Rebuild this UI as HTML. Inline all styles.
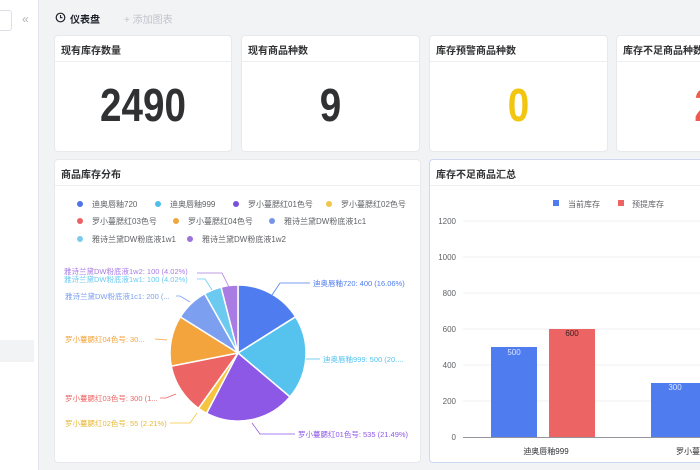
<!DOCTYPE html>
<html><head><meta charset="utf-8"><style>
*{margin:0;padding:0;box-sizing:border-box}
html,body{width:700px;height:470px;overflow:hidden}
body{background:#f2f3f5;font-family:"Liberation Sans","Noto Sans CJK SC",sans-serif;position:relative;color:#1d2129}
.side{position:absolute;left:0;top:0;width:39px;height:470px;background:#fff;border-right:1px solid #e5e6eb}
.card{position:absolute;background:#fff;border-radius:4px;border:1px solid #e8e9ed;overflow:hidden}
.title{height:26px;border-bottom:1px solid #eceef1;font-size:10px;font-weight:bold;padding:6px 0 0 6px;color:#303133;white-space:nowrap}
.num{position:absolute;left:0;right:0;top:46px;text-align:center;font-size:46px;line-height:46px;font-weight:bold;transform:scaleX(.84)}
</style></head><body>
<div class="side">
 <div style="position:absolute;left:-4px;top:10px;width:16px;height:21px;border:1px solid #dcdfe6;border-radius:3px;background:#fff"></div>
 <div style="position:absolute;left:22px;top:12px;font-size:12px;color:#b0b3b8">«</div>
 <div style="position:absolute;left:0;top:340px;width:34px;height:22px;background:#f2f3f5"></div>
</div>
<svg style="position:absolute;left:55px;top:12px" width="11" height="11" viewBox="0 0 11 11"><circle cx="5.5" cy="5.5" r="4.3" fill="none" stroke="#1d2129" stroke-width="1.2"/><path d="M5.5 3v2.7h2" fill="none" stroke="#1d2129" stroke-width="1.1"/></svg>
<div style="position:absolute;left:70px;top:11px;font-size:10px;font-weight:bold">仪表盘</div>
<div style="position:absolute;left:124px;top:11px;font-size:10px;color:#c0c4cc">+ 添加图表</div>

<div class="card" style="left:54px;top:35px;width:178px;height:117px"><div class="title">现有库存数量</div><div class="num" style="color:#303133">2490</div></div>
<div class="card" style="left:241px;top:35px;width:179px;height:117px"><div class="title">现有商品种数</div><div class="num" style="color:#303133">9</div></div>
<div class="card" style="left:429px;top:35px;width:179px;height:117px"><div class="title">库存预警商品种数</div><div class="num" style="color:#f2c511">0</div></div>
<div class="card" style="left:616px;top:35px;width:84px;height:117px;border-right:none;border-radius:4px 0 0 4px"><div class="title">库存不足商品种数</div><div style="position:absolute;left:77px;top:46px;font-size:46px;line-height:46px;font-weight:bold;color:#ee5a52">2</div></div>

<div class="card" style="left:54px;top:159px;width:367px;height:304px"><div class="title">商品库存分布</div></div>
<div class="card" style="left:429px;top:159px;width:271px;height:304px;border-color:#cfd8f3;border-right:none;border-radius:4px 0 0 4px"><div class="title">库存不足商品汇总</div></div>

<svg style="position:absolute;left:0;top:0" width="700" height="470" font-family="Liberation Sans,Noto Sans CJK SC,sans-serif" font-size="8">
<g fill="#606266">
<circle cx="80" cy="204" r="3" fill="#4f74e3"/><text x="92" y="207">迪奥唇釉720</text>
<circle cx="158" cy="204" r="3" fill="#52bde8"/><text x="170" y="207">迪奥唇釉999</text>
<circle cx="236" cy="204" r="3" fill="#7b51d8"/><text x="248" y="207">罗小蔓腮红01色号</text>
<circle cx="329" cy="204" r="3" fill="#f0c64a"/><text x="341" y="207">罗小蔓腮红02色号</text>
<circle cx="80" cy="221" r="3" fill="#ec6262"/><text x="92" y="224">罗小蔓腮红03色号</text>
<circle cx="176" cy="221" r="3" fill="#f1a63b"/><text x="188" y="224">罗小蔓腮红04色号</text>
<circle cx="272" cy="221" r="3" fill="#7596e8"/><text x="284" y="224">雅诗兰黛DW粉底液1c1</text>
<circle cx="80" cy="239" r="3" fill="#7bcbee"/><text x="92" y="242">雅诗兰黛DW粉底液1w1</text>
<circle cx="190" cy="239" r="3" fill="#9b74dc"/><text x="202" y="242">雅诗兰黛DW粉底液1w2</text>
</g>
<g stroke="#fff" stroke-width="1.5">
<path d="M238 353L238 285A68 68 0 0 1 295.57 316.81Z" fill="#4f7cee"/>
<path d="M238 353L295.57 316.81A68 68 0 0 1 289.95 396.87Z" fill="#56c3ef"/>
<path d="M238 353L289.95 396.87A68 68 0 0 1 206.59 413.31Z" fill="#8d58e6"/>
<path d="M238 353L206.59 413.31A68 68 0 0 1 198.47 408.33Z" fill="#f5c542"/>
<path d="M238 353L198.47 408.33A68 68 0 0 1 171.28 366.12Z" fill="#ec6464"/>
<path d="M238 353L171.28 366.12A68 68 0 0 1 180.40 316.86Z" fill="#f4a43c"/>
<path d="M238 353L180.40 316.86A68 68 0 0 1 204.66 293.73Z" fill="#7d9ff0"/>
<path d="M238 353L204.66 293.73A68 68 0 0 1 221.09 287.13Z" fill="#6ccaf0"/>
<path d="M238 353L221.09 287.13A68 68 0 0 1 238 285Z" fill="#a97ce4"/>
</g>
<g fill="none" stroke-width="0.8">
<path d="M272 295L280 283H310" stroke="#4f7cee"/>
<path d="M306 359H320" stroke="#56c3ef"/>
<path d="M252 423L260 434H295" stroke="#8d58e6"/>
<path d="M197 413L190 423H170" stroke="#f5c542"/>
<path d="M176 394L166 398H160" stroke="#ec6464"/>
<path d="M167 340L155 339" stroke="#f4a43c"/>
<path d="M190 302L180 296H176" stroke="#7d9ff0"/>
<path d="M212 290L205 279H197" stroke="#6ccaf0"/>
<path d="M229 287L222 273H197" stroke="#a97ce4"/>
</g>
<g font-size="7.5">
<text x="313" y="286" fill="#4f7cee">迪奥唇釉720: 400 (16.06%)</text>
<text x="323" y="362" fill="#56c3ef">迪奥唇釉999: 500 (20....</text>
<text x="298" y="437" fill="#8d58e6">罗小蔓腮红01色号: 535 (21.49%)</text>
<text x="65" y="426" fill="#e6b93a">罗小蔓腮红02色号: 55 (2.21%)</text>
<text x="65" y="401" fill="#ec6464">罗小蔓腮红03色号: 300 (1...</text>
<text x="65" y="342" fill="#f4a43c">罗小蔓腮红04色号: 30...</text>
<text x="65" y="299" fill="#7d9ff0">雅诗兰黛DW粉底液1c1: 200 (...</text>
<text x="64" y="282" fill="#6ccaf0">雅诗兰黛DW粉底液1w1: 100 (4.02%)</text>
<text x="64" y="274" fill="#a97ce4">雅诗兰黛DW粉底液1w2: 100 (4.02%)</text>
</g>
<rect x="553" y="200" width="6" height="6" fill="#4f7cee"/><text x="568" y="207" fill="#606266">当前库存</text>
<rect x="618" y="200" width="6" height="6" fill="#ec6464"/><text x="632" y="207" fill="#606266">预提库存</text>
<g stroke="#eceef1" stroke-width="0.8">
<line x1="463" y1="221" x2="700" y2="221"/><line x1="463" y1="257" x2="700" y2="257"/><line x1="463" y1="293" x2="700" y2="293"/><line x1="463" y1="329" x2="700" y2="329"/><line x1="463" y1="365" x2="700" y2="365"/><line x1="463" y1="401" x2="700" y2="401"/>
</g>
<line x1="463" y1="437.5" x2="700" y2="437.5" stroke="#6e7079" stroke-width="0.8"/>
<g fill="#606266" text-anchor="end">
<text x="456" y="224">1200</text><text x="456" y="260">1000</text><text x="456" y="296">800</text><text x="456" y="332">600</text><text x="456" y="368">400</text><text x="456" y="404">200</text><text x="456" y="440">0</text>
</g>
<rect x="491" y="347" width="46" height="90" fill="#4f7cee"/>
<rect x="549" y="329" width="46" height="108" fill="#ec6464"/>
<rect x="651" y="383" width="49" height="54" fill="#4f7cee"/>
<g text-anchor="middle" font-size="8">
<text x="514" y="355" fill="#dbe6ff">500</text>
<text x="572" y="336" fill="#3a2020">600</text>
<text x="675" y="390" fill="#dbe6ff">300</text>
<text x="546" y="454" fill="#303133">迪奥唇釉999</text>
</g>
<text x="676" y="454" fill="#303133" font-size="8">罗小蔓</text>
</svg>
</body></html>
